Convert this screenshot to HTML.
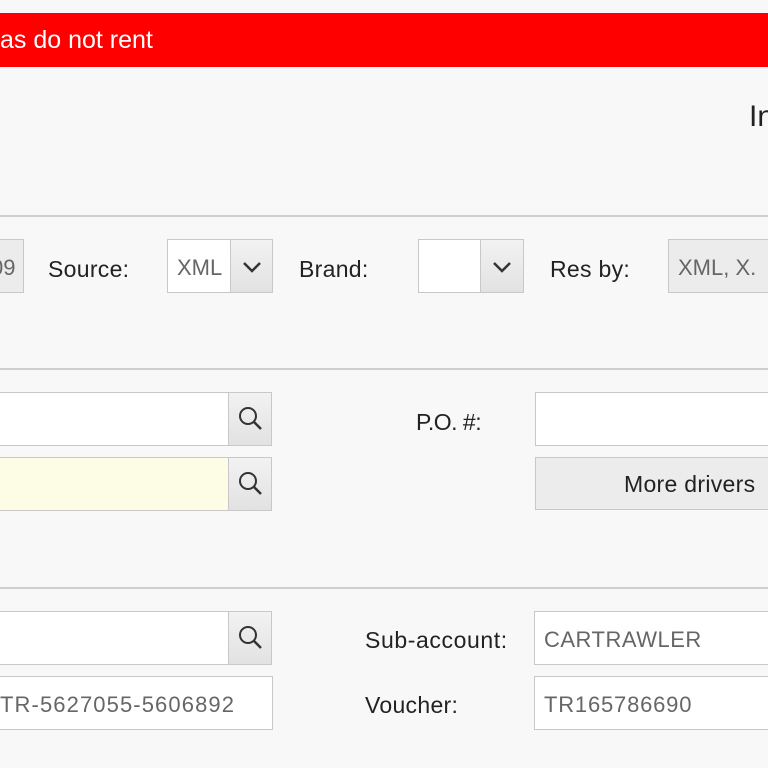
<!DOCTYPE html>
<html><head><style>
body{margin:0;width:768px;height:768px;overflow:hidden;background:#f8f8f8;font-family:"Liberation Sans",sans-serif;position:relative;color:#222}
.a{position:absolute;box-sizing:border-box}
.red{left:0;top:13px;width:768px;height:54px;background:#ff0000;color:#fff;font-size:25px;line-height:54px;letter-spacing:0}
.hr{left:0;width:768px;height:2px;background:#cfcfcf}
.box{border:1px solid #c8c8c8;background:#fff;font-size:22px;color:#666;line-height:56px;padding-left:9px;white-space:nowrap;overflow:hidden}
.btn{border:1px solid #c8c8c8;background:linear-gradient(#f2f2f2,#e2e2e2)}
.lbl{font-size:23px;line-height:56px;color:#222;letter-spacing:0.3px;white-space:nowrap}
svg{position:absolute}
</style></head><body>
<div class="a red">as do not rent</div>
<div class="a" style="left:749px;top:100px;font-size:30px;color:#222">In</div>
<div class="a hr" style="top:215px"></div>
<div class="a hr" style="top:368px"></div>
<div class="a hr" style="top:587px"></div>

<div class="a box" style="left:-10px;top:239px;width:34px;height:54px;background:#ececec;padding-left:0;text-align:right;padding-right:8px">09</div>
<div class="a lbl" style="left:48px;top:241px">Source:</div>
<div class="a box" style="left:167px;top:239px;width:106px;height:54px">XML</div>
<div class="a btn" style="left:230px;top:239px;width:43px;height:54px"><svg width="43" height="52"><path d="M13 23l8 8 8-8" stroke="#333" stroke-width="2.5" fill="none"/></svg></div>
<div class="a lbl" style="left:299px;top:241px">Brand:</div>
<div class="a box" style="left:418px;top:239px;width:106px;height:54px"></div>
<div class="a btn" style="left:480px;top:239px;width:44px;height:54px"><svg width="43" height="52"><path d="M13 23l8 8 8-8" stroke="#333" stroke-width="2.5" fill="none"/></svg></div>
<div class="a lbl" style="left:550px;top:241px">Res by:</div>
<div class="a box" style="left:668px;top:239px;width:110px;height:54px;background:#ececec">XML, X.</div>

<div class="a box" style="left:-10px;top:392px;width:282px;height:54px"></div>
<div class="a btn" style="left:228px;top:392px;width:44px;height:54px"><svg width="43" height="52"><circle cx="19" cy="23" r="8" stroke="#333" stroke-width="2" fill="none"/><path d="M25 29l7 7" stroke="#333" stroke-width="2.5"/></svg></div>
<div class="a lbl" style="left:416px;top:394px;letter-spacing:-0.5px">P.O. #:</div>
<div class="a box" style="left:535px;top:392px;width:245px;height:54px"></div>

<div class="a box" style="left:-10px;top:457px;width:282px;height:54px;background:#fdfde6"></div>
<div class="a btn" style="left:228px;top:457px;width:44px;height:54px"><svg width="43" height="52"><circle cx="19" cy="23" r="8" stroke="#333" stroke-width="2" fill="none"/><path d="M25 29l7 7" stroke="#333" stroke-width="2.5"/></svg></div>
<div class="a btn" style="left:535px;top:457px;width:245px;height:53px;background:#ececec"></div>
<div class="a lbl" style="left:624px;top:456px">More drivers</div>

<div class="a box" style="left:-10px;top:611px;width:282px;height:54px"></div>
<div class="a btn" style="left:228px;top:611px;width:44px;height:54px"><svg width="43" height="52"><circle cx="19" cy="23" r="8" stroke="#333" stroke-width="2" fill="none"/><path d="M25 29l7 7" stroke="#333" stroke-width="2.5"/></svg></div>
<div class="a lbl" style="left:365px;top:612px;letter-spacing:0.6px">Sub-account:</div>
<div class="a box" style="left:534px;top:611px;width:245px;height:54px;letter-spacing:0.5px">CARTRAWLER</div>

<div class="a box" style="left:-10px;top:676px;width:283px;height:54px;padding-left:9px;letter-spacing:1.1px">TR-5627055-5606892</div>
<div class="a lbl" style="left:365px;top:677px">Voucher:</div>
<div class="a box" style="left:534px;top:676px;width:245px;height:54px;letter-spacing:0.8px">TR165786690</div>
</body></html>
